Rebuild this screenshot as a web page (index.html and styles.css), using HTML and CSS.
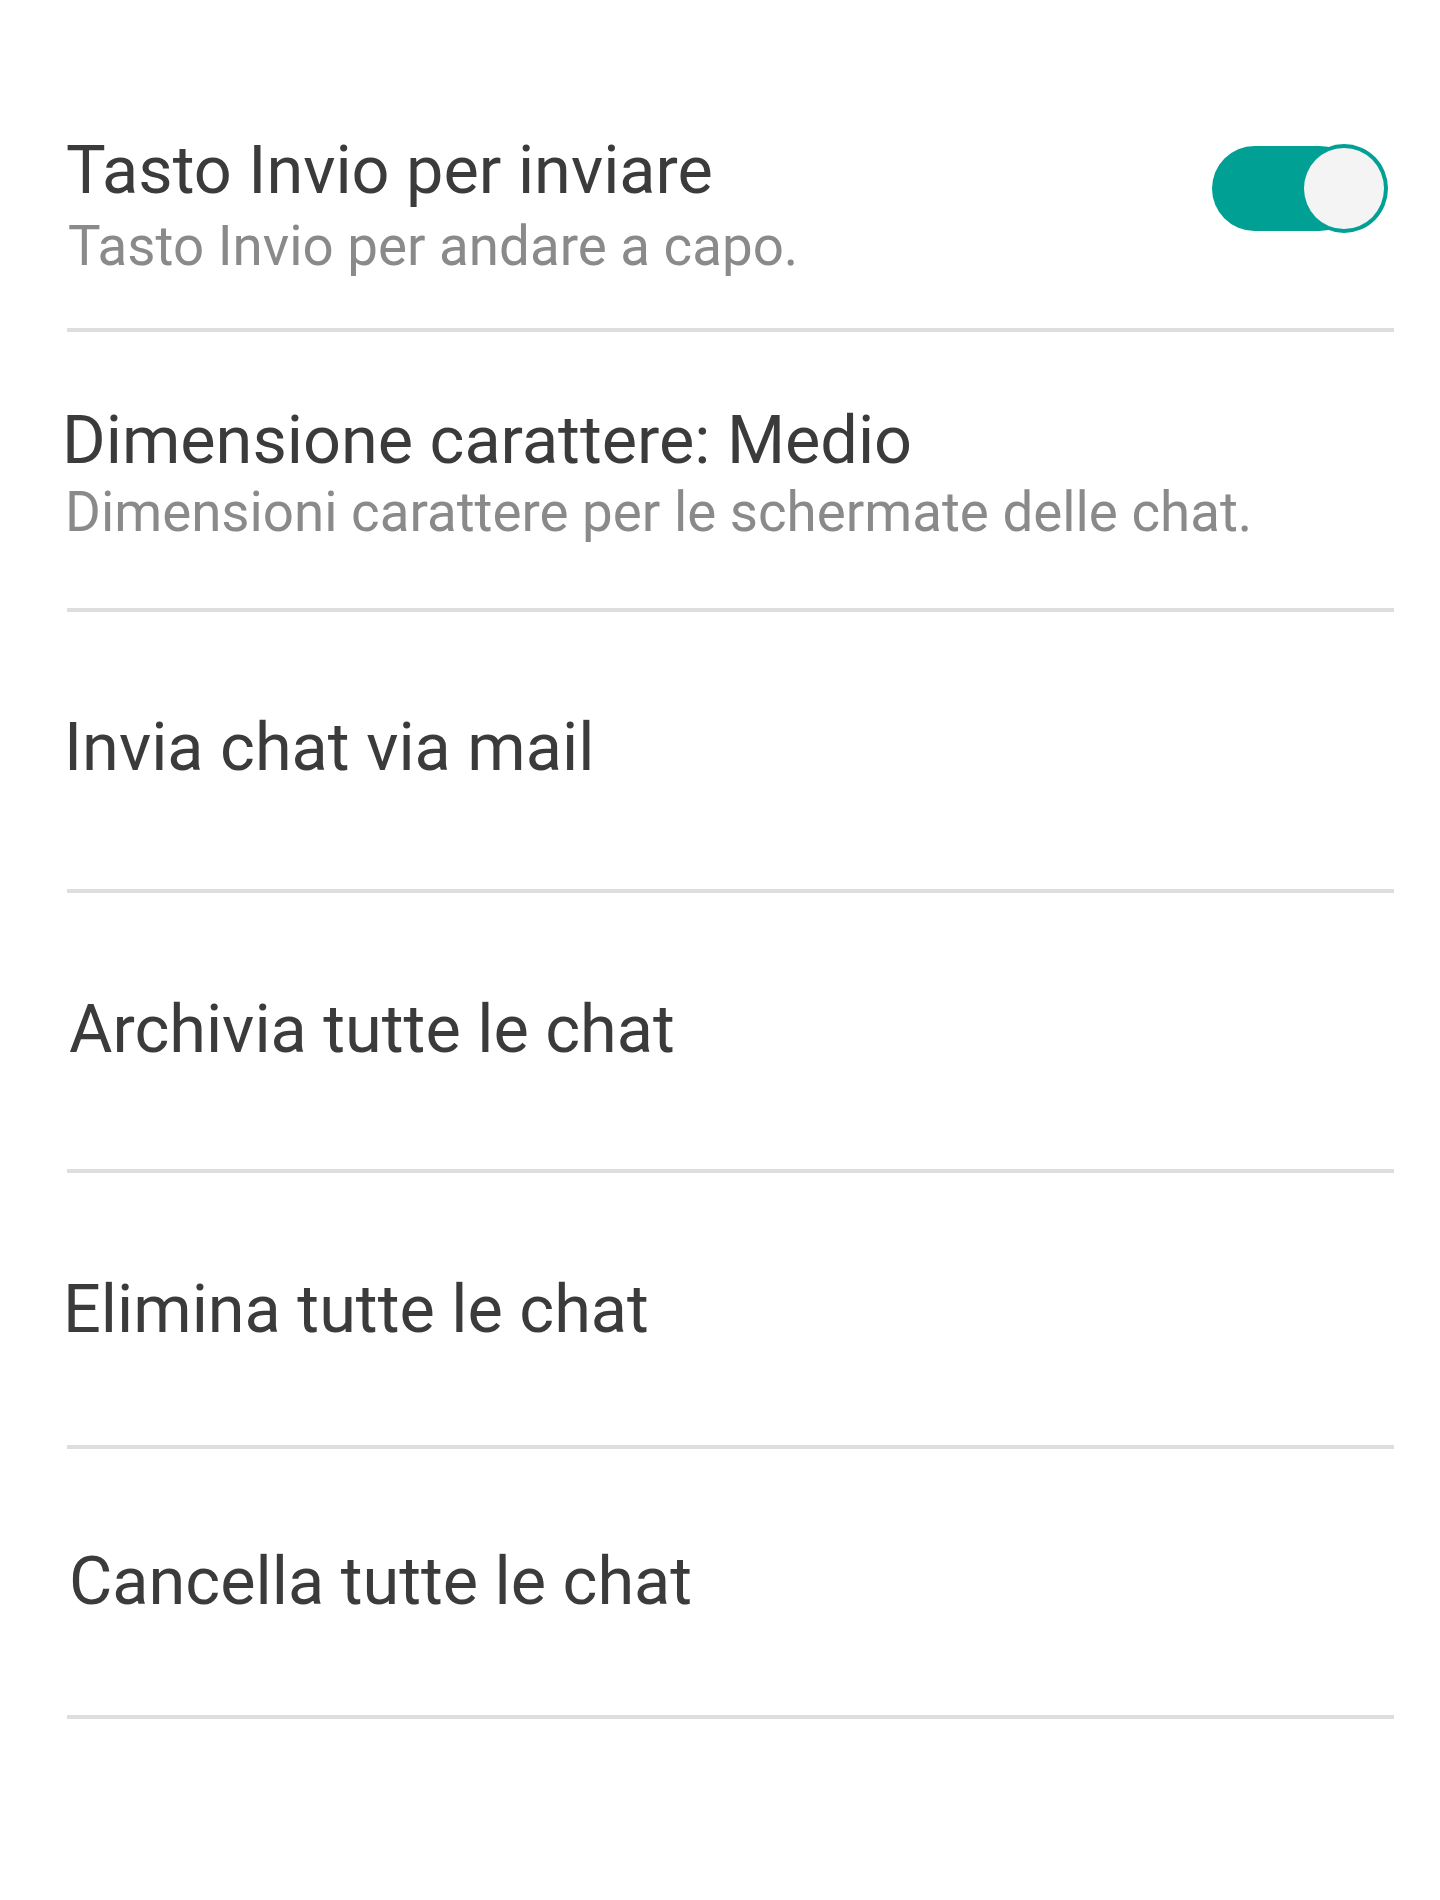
FILE: index.html
```html
<!DOCTYPE html>
<html lang="it">
<head>
<meta charset="utf-8">
<title>Impostazioni chat</title>
<link rel="stylesheet" href="styles.css">
</head>
<body>
<main class="settings">
  <div class="item item--toggle">
    <div class="item__text">
      <div class="item__title">Tasto Invio per inviare</div>
      <div class="item__sub">Tasto Invio per andare a capo.</div>
    </div>
    <span class="switch" role="switch" aria-checked="true">
      <span class="switch__track"></span>
      <span class="switch__thumb"></span>
    </span>
  </div>
  <div class="item item--font">
    <div class="item__text">
      <div class="item__title">Dimensione carattere: Medio</div>
      <div class="item__sub">Dimensioni carattere per le schermate delle chat.</div>
    </div>
  </div>
  <div class="item item--mail">
    <div class="item__text">
      <div class="item__title">Invia chat via mail</div>
    </div>
  </div>
  <div class="item item--archive">
    <div class="item__text">
      <div class="item__title">Archivia tutte le chat</div>
    </div>
  </div>
  <div class="item item--delete">
    <div class="item__text">
      <div class="item__title">Elimina tutte le chat</div>
    </div>
  </div>
  <div class="item item--clear">
    <div class="item__text">
      <div class="item__title">Cancella tutte le chat</div>
    </div>
  </div>
</main>
</body>
</html>
```

FILE: styles.css
```css
html, body {
  margin: 0;
  padding: 0;
  background: #ffffff;
}

body {
  font-family: Roboto, "Liberation Sans", sans-serif;
  width: 1440px;
  min-height: 1900px;
}

.settings {
  display: flex;
  flex-direction: column;
  padding: 0 46px 0 67px;
}

.item {
  display: flex;
  align-items: flex-start;
  border-bottom: 4px solid #dedede;
}

.item__text {
  display: flex;
  flex-direction: column;
  min-width: 0;
}

.item__title {
  font-size: 66.6px;
  line-height: 80px;
  color: #3b3b3b;
  white-space: nowrap;
}

.item__sub {
  font-size: 54.7px;
  line-height: 70px;
  color: #8a8a8a;
  white-space: nowrap;
}

/* row 1 */
.item--toggle {
  padding: 130px 0 47px;
}
.item--toggle .item__title {
  margin-left: -1px;
}
.item--toggle .item__sub {
  margin-top: 1px;
  margin-left: 1px;
}

/* row 2 */
.item--font {
  padding: 68px 0 61px;
}
.item--font .item__title {
  margin-left: -5px;
}
.item--font .item__sub {
  margin-top: -3px;
  margin-left: -2px;
}

/* rows 3-6 */
.item--mail {
  padding: 95px 0 102px;
}
.item--mail .item__title {
  margin-left: -3px;
}

.item--archive {
  padding: 96px 0 100px;
}
.item--archive .item__title {
  margin-left: 2px;
}

.item--delete {
  padding: 96px 0 96px;
}
.item--delete .item__title {
  margin-left: -4px;
}

.item--clear {
  padding: 92px 0 94px;
}
.item--clear .item__title {
  margin-left: 2px;
}

/* switch */
.switch {
  position: relative;
  flex: none;
  width: 176px;
  height: 90px;
  margin-left: auto;
  margin-top: 14px;
  margin-right: 6px;
}

.switch__track {
  position: absolute;
  left: 0;
  top: 2px;
  width: 150px;
  height: 85px;
  border-radius: 43px;
  background: #00a094;
}

.switch__thumb {
  position: absolute;
  right: 0;
  top: 0;
  width: 80px;
  height: 81px;
  border: 4px solid #00a094;
  border-radius: 50%;
  background: #f4f4f4;
}
```
